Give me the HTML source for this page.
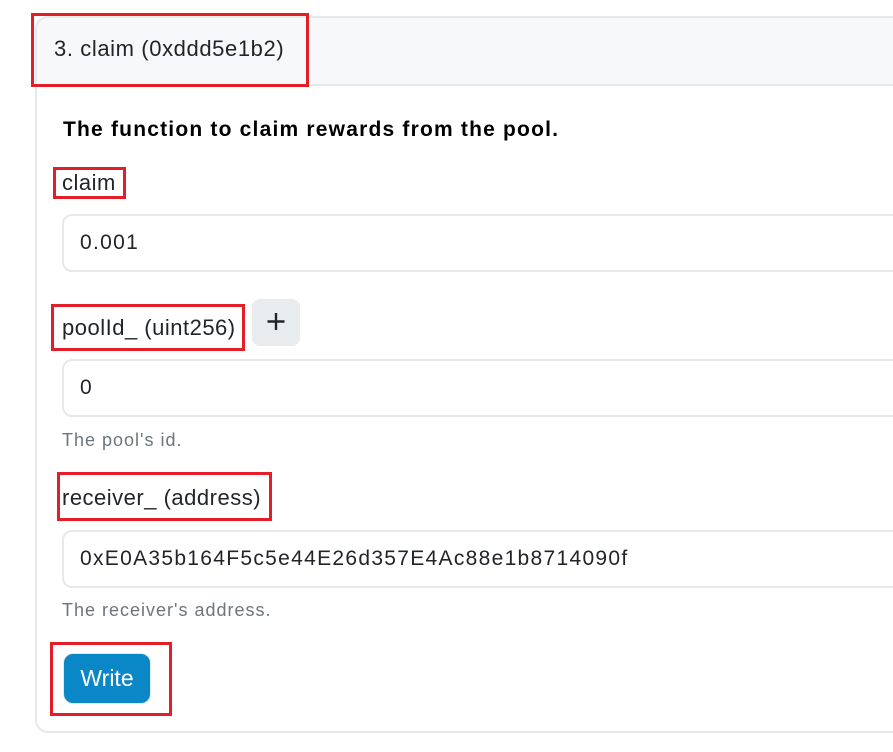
<!DOCTYPE html>
<html><head><meta charset="utf-8"><style>
*{box-sizing:border-box;margin:0;padding:0}
body{width:893px;height:752px;background:#fff;font-family:"Liberation Sans",Arial,sans-serif;color:#212529;position:relative;overflow:hidden}
.card{position:absolute;left:35px;top:16px;width:900px;height:717px;border:2px solid #e6e9ec;border-radius:13px;overflow:hidden}
.hdr{position:absolute;left:0;top:0;right:0;height:68px;background:#f7f8fa;border-bottom:2px solid #e6e9ec}
.t{position:absolute;white-space:nowrap}
.red{position:absolute;border:3px solid #e31e26}
.inp{position:absolute;left:62px;width:900px;height:58px;border:2px solid #e6e9ec;border-radius:10px;font-size:21px;letter-spacing:1.3px;padding-left:16px;line-height:54px;color:#212529}
.help{font-size:18px;color:#6c757d;letter-spacing:1px}
.lbl{font-size:22px;letter-spacing:0.5px}
</style></head><body>
<div class="card"><div class="hdr"></div></div>
<div class="t" style="left:54px;top:36px;font-size:22px;letter-spacing:0.6px">3. claim (0xddd5e1b2)</div>
<div class="red" style="left:31px;top:13px;width:278px;height:74px"></div>
<div class="t" style="left:63px;top:118px;font-size:21px;letter-spacing:1.2px;font-weight:bold;color:#000">The function to claim rewards from the pool.</div>
<div class="t lbl" style="left:62px;top:170px">claim</div>
<div class="red" style="left:53px;top:167px;width:73px;height:32px"></div>
<div class="inp" style="top:214px">0.001</div>
<div class="t lbl" style="left:62px;top:315px">poolId_ (uint256)</div>
<div class="red" style="left:51px;top:304px;width:194px;height:47px"></div>
<div style="position:absolute;left:252px;top:299px;width:48px;height:47px;background:#e9ecef;border-radius:8px">
<svg width="48" height="47" viewBox="0 0 48 47"><path d="M24 14V31M15.5 22.5H32.5" stroke="#212529" stroke-width="2.4"/></svg></div>
<div class="inp" style="top:359px">0</div>
<div class="t help" style="left:62px;top:430px">The pool's id.</div>
<div class="t lbl" style="left:62px;top:485px">receiver_ (address)</div>
<div class="red" style="left:57px;top:472px;width:215px;height:49px"></div>
<div class="inp" style="top:530px">0xE0A35b164F5c5e44E26d357E4Ac88e1b8714090f</div>
<div class="t help" style="left:62px;top:600px">The receiver's address.</div>
<div style="position:absolute;left:63px;top:653px;width:88px;height:51px;background:#0a87c6;border-radius:10px;border:1px solid #dfe9f0;color:#fff;font-size:23px;text-align:center;line-height:49px">Write</div>
<div class="red" style="left:50px;top:642px;width:122px;height:74px"></div>
</body></html>
